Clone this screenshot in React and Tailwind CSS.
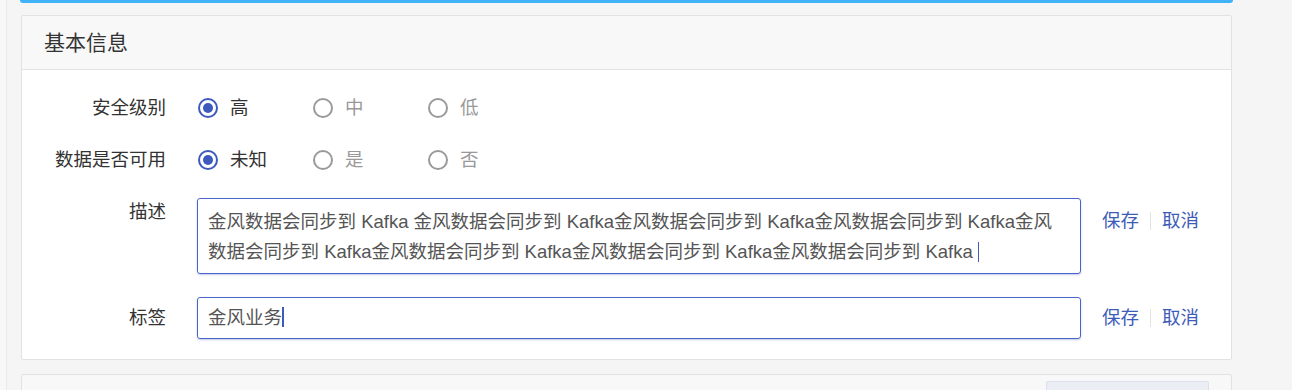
import React from 'react';

const font = { fontFamily: '"Liberation Sans", "Noto Sans CJK SC", sans-serif' };

function Radio({ label, checked }) {
  return (
    <div className="flex items-center w-[115px]">
      <span
        className={
          'flex items-center justify-center w-[20px] h-[20px] rounded-full border-2 ' +
          (checked ? 'border-[#3c59bd]' : 'border-[#9a9a9a]')
        }
      >
        {checked && <span className="w-[10px] h-[10px] rounded-full bg-[#3c59bd]" />}
      </span>
      <span className={'ml-[12px] text-[18.5px] ' + (checked ? 'text-[#333]' : 'text-[#999]')}>{label}</span>
    </div>
  );
}

function Actions() {
  return (
    <div className="flex items-center ml-[21px] text-[18.5px] text-[#3d5cb8]">
      <span>保存</span>
      <span className="mx-[11px] w-px h-[18px] bg-[#e2e2e2]" />
      <span>取消</span>
    </div>
  );
}

function Caret() {
  return <span className="inline-block w-[1.5px] h-[20px] bg-[#3d5cb8] align-middle -mt-[3px]" />;
}

export default function App() {
  const options1 = [
    { label: '高', checked: true },
    { label: '中' },
    { label: '低' },
  ];
  const options2 = [
    { label: '未知', checked: true },
    { label: '是' },
    { label: '否' },
  ];

  return (
    <div className="flex h-[390px] bg-[#f5f5f5] overflow-hidden" style={font}>
      <div className="w-[7px] shrink-0 bg-[#f8f8f8] border-r border-[#e9e9e9]" />
      <div className="ml-[13px] w-[1213px] shrink-0 flex flex-col">
        <div className="h-[3px] shrink-0 bg-[#3fb2f8] rounded-b-[3px]" />

        <div className="mt-[12px] ml-px w-[1211px] shrink-0 bg-white border border-[#e2e2e2] rounded-[2px]">
          <div className="h-[54px] flex items-center pl-[22px] bg-[#f8f8f8] border-b border-[#e2e2e2] text-[21px] text-[#333]">
            基本信息
          </div>

          <div className="pt-[22px] pb-[20px]">
            <div className="flex items-center h-[32px]">
              <div className="w-[144px] text-right text-[18.5px] text-[#333]">安全级别</div>
              <div className="ml-[32px] flex">
                {options1.map((o) => (
                  <Radio key={o.label} {...o} />
                ))}
              </div>
            </div>

            <div className="flex items-center h-[32px] mt-[20px]">
              <div className="w-[144px] text-right text-[18.5px] text-[#333]">数据是否可用</div>
              <div className="ml-[32px] flex">
                {options2.map((o) => (
                  <Radio key={o.label} {...o} />
                ))}
              </div>
            </div>

            <div className="flex items-start mt-[22px]">
              <div className="w-[144px] pt-[2px] text-right text-[18.5px] leading-[24px] text-[#333]">描述</div>
              <div className="ml-[31px] w-[884px] h-[76px] border border-[#4a63c6] rounded-[3px] shadow-[0_1px_2px_rgba(74,99,198,0.35)] pl-[10px] pt-[8px] text-[18.5px] leading-[30px] text-[#555] whitespace-nowrap overflow-hidden">
                金风数据会同步到 Kafka 金风数据会同步到 Kafka金风数据会同步到 Kafka金风数据会同步到 Kafka金风
                <br />
                数据会同步到 Kafka金风数据会同步到 Kafka金风数据会同步到 Kafka金风数据会同步到 Kafka <Caret />
              </div>
              <div className="h-[46px] flex items-center">
                <Actions />
              </div>
            </div>

            <div className="flex items-center mt-[23px]">
              <div className="w-[144px] text-right text-[18.5px] text-[#333]">标签</div>
              <div className="ml-[31px] w-[884px] h-[42px] flex items-center border border-[#4a63c6] rounded-[3px] shadow-[0_1px_2px_rgba(74,99,198,0.35)] pl-[10px] text-[18.5px] text-[#555]">
                金风业务
                <Caret />
              </div>
              <Actions />
            </div>
          </div>
        </div>

        <div className="mt-[14px] ml-px w-[1211px] h-[40px] shrink-0 bg-[#f8f8f8] border border-[#e2e2e2] rounded-[2px] flex justify-end pr-[22px] pt-[6px]">
          <div className="w-[163px] h-[40px] shrink-0 bg-[#eceef5] border border-[#dde0ec] rounded-[2px]" />
        </div>
      </div>
    </div>
  );
}
